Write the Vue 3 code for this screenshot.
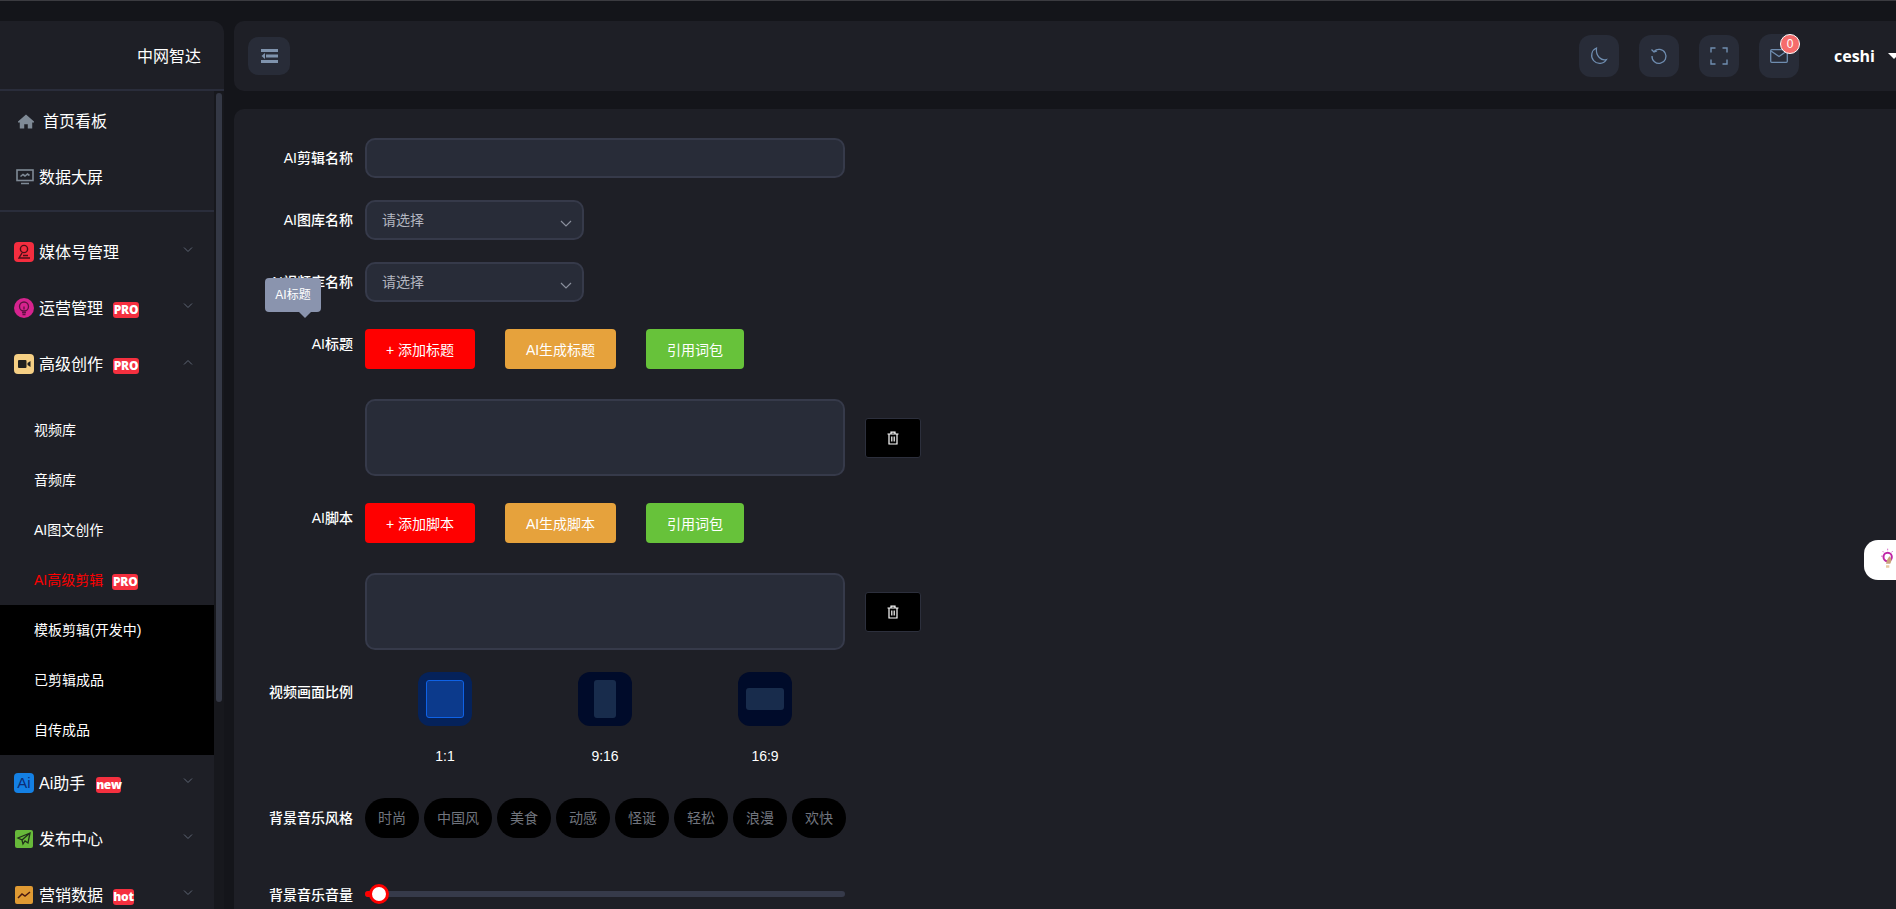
<template>
  <div class="page">
    <aside class="sidebar">
      <div class="logo">中网智达</div>
      <div class="side-body">
        <nav class="menu">
          <div class="top-item home">
            <svg class="top-icon" viewBox="0 0 18 16"><path d="M9 0 0 8v1h2v7h5v-5h4v5h5V9h2V8z" fill="#7f8a96" /></svg>
            <span class="lift">首页看板</span>
          </div>
          <div class="top-item screen">
            <svg class="top-icon wide" viewBox="0 0 18 16" fill="none" stroke="#7f8a96" stroke-width="1.6">
              <rect x="1" y="1" width="16" height="10.5" />
              <path d="M4.5 7.5l2.5-2 2 1.5 2.5-2 2 1.5M5 14.5h8" />
            </svg>
            <span class="lift">数据大屏</span>
          </div>
          <div class="menu-line"></div>

          <template v-for="group in groups" :key="group.name">
            <div class="group-item">
              <span class="badge-icon" :class="group.icon">
                <svg v-if="group.icon === 'ic-media'" viewBox="0 0 20 20" fill="none" stroke="#4a1018" stroke-width="1.4">
                  <circle cx="10" cy="7" r="3.6" />
                  <path d="M8 11l-3 5h11M9 13.5h5" />
                </svg>
                <svg v-else-if="group.icon === 'ic-ops'" viewBox="0 0 20 20" fill="none" stroke="#5c1240" stroke-width="1.3">
                  <circle cx="10" cy="8.5" r="4.5" />
                  <path d="M8 14.5h4M8.5 16.5h3M10 8.5v3" />
                </svg>
                <svg v-else-if="group.icon === 'ic-video'" viewBox="0 0 20 20">
                  <rect x="4" y="6" width="8.5" height="8" rx="1" fill="#20201e" />
                  <path d="M13.5 9l3-2v6l-3-2z" fill="#20201e" />
                </svg>
                <span v-else-if="group.icon === 'ic-ai'" class="ai-mark">Ai</span>
                <svg v-else-if="group.icon === 'ic-send'" viewBox="0 0 18 18" fill="none" stroke="#20301a" stroke-width="1.3">
                  <path d="M15 3 3 8l4 2 1 4 2-3 3 2zM7 10l8-7" />
                </svg>
                <svg v-else viewBox="0 0 18 18" fill="none" stroke="#4a1a10" stroke-width="1.5">
                  <path d="M3 12l4-4 3 2 5-4" />
                </svg>
              </span>
              <span class="group-name lift">{{ group.name }}</span>
              <span v-if="group.tag" class="tag" :class="'tag-' + group.tag">{{ group.tag }}</span>
              <svg class="chevron" viewBox="0 0 10 6" fill="none" stroke="#5e6674" stroke-width="1">
                <path :d="group.open ? 'M1 5.5 5 1.5l4 4' : 'M1 .5l4 4 4-4'" />
              </svg>
            </div>
            <div v-if="group.open" class="submenu">
              <div v-for="sub in subItems" :key="sub.name" class="sub-item" :class="{ active: sub.active, dark: sub.dark }">
                <span class="lift">{{ sub.name }}</span>
                <span v-if="sub.tag" class="tag tag-PRO sub-tag">{{ sub.tag }}</span>
              </div>
            </div>
          </template>
        </nav>
        <div class="scroll-track"><div class="scroll-thumb"></div></div>
      </div>
    </aside>

    <div class="content">
      <header class="topbar">
        <button class="collapse">
          <svg viewBox="0 0 17 14" width="17" height="14" fill="#7f93ad">
            <rect x="0" y="0" width="17" height="3" />
            <rect x="5" y="5.5" width="12" height="3" />
            <rect x="0" y="11" width="17" height="3" />
            <path d="M4 4 .5 7 4 10z" />
          </svg>
        </button>
        <div class="top-actions">
          <button class="tool">
            <svg viewBox="0 0 20 20" width="20" height="20" fill="none" stroke="#6f8db0" stroke-width="1.2">
              <path d="M7.5 2a8 8 0 1 0 10 11.5c-5 1.5-11-3-10-11.5z" />
            </svg>
          </button>
          <button class="tool">
            <svg viewBox="0 0 20 20" width="20" height="20" fill="none" stroke="#6f8db0" stroke-width="1.3">
              <path d="M5 5.5A7 7 0 1 1 3 10" />
              <path d="M2.5 3.5l2.5 2.5 3-1" />
            </svg>
          </button>
          <button class="tool">
            <svg viewBox="0 0 18 18" width="18" height="18" fill="none" stroke="#6f8db0" stroke-width="1.4">
              <path d="M1 5.5V1h4.5M12.5 1H17v4.5M17 12.5V17h-4.5M5.5 17H1v-4.5" />
            </svg>
          </button>
          <button class="tool mail">
            <svg viewBox="0 0 18 14" width="18" height="14" fill="none" stroke="#6f8db0" stroke-width="1.3">
              <rect x=".7" y=".7" width="16.6" height="12.6" rx="1" />
              <path d="M1 2l8 5.5L17 2" />
            </svg>
            <span class="count">0</span>
          </button>
        </div>
        <div class="user">
          <span>ceshi</span>
          <i class="caret"></i>
        </div>
      </header>

      <main class="panel">
        <div class="form">
          <div class="row r-name">
            <label>AI剪辑名称</label>
            <div class="field field-wide"></div>
          </div>
          <div class="row r-name">
            <label>AI图库名称</label>
            <div class="field field-select">请选择<svg class="select-arrow" viewBox="0 0 12 7" fill="none" stroke="#8a8f9c" stroke-width="1.2"><path d="M1 1l5 5 5-5" /></svg></div>
          </div>
          <div class="row r-lib">
            <label>AI视频库名称</label>
            <div class="field field-select">请选择<svg class="select-arrow" viewBox="0 0 12 7" fill="none" stroke="#8a8f9c" stroke-width="1.2"><path d="M1 1l5 5 5-5" /></svg></div>
            <div class="tooltip">AI标题</div>
          </div>

          <template v-for="(block, i) in blocks" :key="block.label">
            <div class="row r-btn">
              <label class="short">{{ block.label }}</label>
              <div class="btn-group">
                <button class="btn red">{{ block.add }}</button>
                <button class="btn orange">{{ block.gen }}</button>
                <button class="btn green">引用词包</button>
              </div>
            </div>
            <div class="row r-text" :class="{ 'r-text-end': i === blocks.length - 1 }">
              <label></label>
              <div class="field field-area"></div>
              <button class="del">
                <svg viewBox="0 0 14 14" width="14" height="14" fill="none" stroke="#fff" stroke-width="1.2">
                  <path d="M1.5 3h11M5 3V1.2h4V3M3 3v10h8V3M5.8 5.5v5M8.2 5.5v5" />
                </svg>
              </button>
            </div>
          </template>

          <div class="row r-ratio">
            <label>视频画面比例</label>
            <div class="ratios">
              <div v-for="r in ratios" :key="r.label" class="ratio">
                <div class="ratio-box" :class="{ on: r.on }">
                  <div class="ratio-inner" :class="r.shape"></div>
                </div>
                <div class="ratio-label">{{ r.label }}</div>
              </div>
            </div>
          </div>

          <div class="row r-music">
            <label>背景音乐风格</label>
            <div class="chips">
              <span v-for="c in styles" :key="c" class="chip">{{ c }}</span>
            </div>
          </div>

          <div class="row">
            <label>背景音乐音量</label>
            <div class="slider">
              <div class="slider-fill"></div>
              <div class="slider-thumb"></div>
            </div>
          </div>
        </div>
      </main>
    </div>

    <div class="float-tab">
      <svg viewBox="0 0 18 26" width="15" height="23" fill="none">
        <path d="M2 3l1.5 1.5M8 0v2M14 3l-1.5 1.5M0 9h2" stroke="#d86ac8" stroke-width="1.2" />
        <circle cx="8" cy="10" r="5" stroke="#c026a8" stroke-width="2.4" />
        <path d="M10 9c3 2 3 6 1 9H6l1-4z" fill="#c9a27a" />
        <path d="M6 20h4v3H6z" fill="#e8c9a0" />
      </svg>
    </div>
  </div>
</template>

<script setup>
const groups = [
  { name: '媒体号管理', icon: 'ic-media' },
  { name: '运营管理', icon: 'ic-ops', tag: 'PRO' },
  { name: '高级创作', icon: 'ic-video', tag: 'PRO', open: true },
  { name: 'Ai助手', icon: 'ic-ai', tag: 'new' },
  { name: '发布中心', icon: 'ic-send' },
  { name: '营销数据', icon: 'ic-data', tag: 'hot' }
]

const subItems = [
  { name: '视频库' },
  { name: '音频库' },
  { name: 'AI图文创作' },
  { name: 'AI高级剪辑', active: true, tag: 'PRO' },
  { name: '模板剪辑(开发中)', dark: true },
  { name: '已剪辑成品', dark: true },
  { name: '自传成品', dark: true }
]

const blocks = [
  { label: 'AI标题', add: '+ 添加标题', gen: 'AI生成标题' },
  { label: 'AI脚本', add: '+ 添加脚本', gen: 'AI生成脚本' }
]

const ratios = [
  { label: '1:1', shape: 'square', on: true },
  { label: '9:16', shape: 'tall' },
  { label: '16:9', shape: 'flat' }
]

const styles = ['时尚', '中国风', '美食', '动感', '怪诞', '轻松', '浪漫', '欢快']
</script>

<style>
html, body {
  margin: 0;
  height: 100%;
  overflow: hidden;
  background: #14151a;
}
</style>

<style scoped>
.page {
  position: relative;
  display: flex;
  height: 909px;
  padding-top: 21px;
  box-sizing: border-box;
  overflow: hidden;
  gap: 10px;
  background: #14151a;
  border-top: 1px solid #3b3b40;
  font-family: "Liberation Sans", "Noto Sans CJK SC", sans-serif;
  font-size: 14px;
  color: #fff;
}

.sidebar {
  width: 224px;
  flex: none;
  display: flex;
  flex-direction: column;
  margin-top: -1px;
  height: 888px;
}

.logo {
  height: 68px;
  padding-right: 23px;
  text-align: right;
  line-height: 72px;
  font-size: 16px;
  background: #1e1f26;
  border-top-right-radius: 12px;
  border-bottom: 2px solid #2a2d3b;
}

.side-body {
  flex: 1;
  display: flex;
  min-height: 0;
  overflow: hidden;
}

.menu {
  width: 214px;
  flex: none;
  background: #1e1f26;
  padding-top: 2px;
}

.scroll-track {
  width: 10px;
  background: #17181d;
}

.scroll-thumb {
  width: 6px;
  height: 609px;
  margin: 2px 0 0 2px;
  border-radius: 3px;
  background: #343845;
}

.lift {
  padding-bottom: 2px;
}

.top-item {
  display: flex;
  align-items: center;
  height: 56px;
  font-size: 16px;
}

.top-icon {
  width: 16px;
  height: 15px;
  flex: none;
}

.home {
  padding-left: 18px;
  gap: 9px;
}

.screen {
  padding-left: 16px;
  gap: 5px;
}

.top-icon.wide {
  width: 18px;
  height: 16px;
}

.menu-line {
  height: 2px;
  margin-top: 5px;
  margin-bottom: 12px;
  background: #2a2d3b;
}

.group-item {
  position: relative;
  display: flex;
  align-items: center;
  height: 56px;
  padding-left: 14px;
  font-size: 16px;
}

.badge-icon {
  width: 20px;
  height: 20px;
  flex: none;
  display: flex;
  align-items: center;
  justify-content: center;
  border-radius: 4px;
  margin-right: 5px;
}

.badge-icon svg {
  width: 100%;
  height: 100%;
}

.ic-media { background: #f52d3f; }
.ic-ops { background: #d6238e; border-radius: 50%; }
.ic-video { background: #f5cf84; }
.ic-ai { background: #1480e4; }
.ic-send { background: #67b93a; width: 18px; height: 18px; margin: 0 6px 0 1px; border-radius: 2px; }
.ic-data { background: #e09a33; width: 18px; height: 18px; margin: 0 6px 0 1px; border-radius: 2px; }

.ai-mark {
  color: #0c2c74;
  font-size: 15px;
  line-height: 20px;
}

.tag {
  display: inline-block;
  margin-left: 10px;
  margin-top: 3px;
  height: 16px;
  line-height: 16px;
  text-align: center;
  border-radius: 3px;
  background: #f5303f;
  font-size: 12px;
  font-weight: 800;
  color: #fff;
  font-family: "Open Sans", "Liberation Sans", sans-serif;
}

.tag-PRO { width: 26px; letter-spacing: -0.3px; }
.tag-new { width: 25px; margin-left: 11px; letter-spacing: -0.4px; }
.tag-hot { width: 21px; letter-spacing: -0.2px; }

.chevron {
  position: absolute;
  right: 21px;
  top: 23px;
  width: 10px;
  height: 6px;
}

.submenu {
  padding-top: 13px;
}

.sub-item {
  display: flex;
  align-items: center;
  height: 50px;
  padding-left: 34px;
  font-size: 14px;
}

.sub-item.active {
  color: #ff0000;
}

.sub-item.dark {
  background: #000;
}

.sub-tag {
  margin-left: 9px;
}

.content {
  flex: 1;
  min-width: 0;
  display: flex;
  flex-direction: column;
  margin-top: -1px;
  gap: 18px;
}

.topbar {
  height: 70px;
  flex: none;
  display: flex;
  align-items: center;
  padding-left: 14px;
  background: #1e1f26;
  border-radius: 10px 0 0 10px;
}

.collapse {
  width: 42px;
  height: 38px;
  padding: 0;
  border: 0;
  border-radius: 10px;
  background: #282c38;
  display: flex;
  align-items: center;
  justify-content: center;
}

.top-actions {
  margin-left: auto;
  display: flex;
  align-items: center;
  gap: 20px;
}

.tool {
  position: relative;
  width: 40px;
  height: 42px;
  padding: 0;
  border: 0;
  border-radius: 12px;
  background: #282c38;
  display: flex;
  align-items: center;
  justify-content: center;
}

.tool.mail {
  height: 44px;
}

.count {
  position: absolute;
  top: 0;
  right: -1px;
  width: 20px;
  height: 20px;
  box-sizing: border-box;
  border: 1px solid #fff;
  border-radius: 50%;
  background: #f56c6c;
  color: #fff;
  font-size: 12px;
  line-height: 18px;
  text-align: center;
  font-family: "Liberation Sans", sans-serif;
}

.user {
  display: flex;
  align-items: center;
  gap: 13px;
  margin-left: 35px;
  margin-right: -4px;
  font-family: "Open Sans", sans-serif;
  font-weight: 700;
  font-size: 16px;
}

.caret {
  width: 0;
  height: 0;
  border-left: 6px solid transparent;
  border-right: 6px solid transparent;
  border-top: 6px solid #fff;
}

.panel {
  flex: 1;
  background: #1e1f26;
  border-radius: 10px 0 0 0;
  overflow: hidden;
  padding-top: 29px;
}

.row {
  position: relative;
  display: flex;
  align-items: flex-start;
  gap: 12px;
}

.row label {
  width: 119px;
  flex: none;
  text-align: right;
  line-height: 40px;
  font-size: 14px;
  font-weight: 500;
}

.row label.short {
  line-height: 30px;
}

.r-name { margin-bottom: 22px; }
.r-lib { margin-bottom: 27px; }
.r-btn { margin-bottom: 30px; }
.r-text { margin-bottom: 27px; align-items: center; }
.r-text-end { margin-bottom: 22px; }
.r-ratio { margin-bottom: 32px; }
.r-music { margin-bottom: 37px; }

.field {
  box-sizing: border-box;
  background: #282c38;
  border: 2px solid #363a4a;
  border-radius: 10px;
}

.field-wide {
  width: 480px;
  height: 40px;
}

.field-select {
  position: relative;
  width: 219px;
  height: 40px;
  padding-left: 15px;
  line-height: 36px;
  font-size: 14px;
  color: #b3b6c0;
}

.select-arrow {
  position: absolute;
  right: 10px;
  top: 18px;
  width: 12px;
  height: 7px;
}

.field-area {
  width: 480px;
  height: 77px;
}

.tooltip {
  position: absolute;
  left: 31px;
  top: 16px;
  width: 56px;
  height: 34px;
  border-radius: 4px;
  background: #8a94ae;
  font-size: 12px;
  line-height: 34px;
  text-align: center;
}

.tooltip::after {
  content: "";
  position: absolute;
  left: 34px;
  top: 34px;
  border-left: 6px solid transparent;
  border-right: 6px solid transparent;
  border-top: 6px solid #8a94ae;
}

.btn-group {
  display: flex;
  gap: 30px;
}

.btn {
  height: 40px;
  padding: 0;
  border: 0;
  border-radius: 4px;
  color: #fff;
  font-family: inherit;
  font-size: 14px;
}

.red { width: 110px; background: #ff0000; }
.orange { width: 111px; background: #e6a23c; }
.green { width: 98px; background: #67c23a; }

.del {
  width: 56px;
  height: 40px;
  margin-left: 8px;
  padding: 0;
  border: 1px solid #2c2f3c;
  border-radius: 3px;
  background: #000;
  display: flex;
  align-items: center;
  justify-content: center;
}

.ratios {
  display: flex;
  margin-left: 53px;
  gap: 106px;
}

.ratio {
  width: 54px;
  text-align: center;
}

.ratio-box {
  width: 54px;
  height: 54px;
  border-radius: 12px;
  background: #000b2a;
  display: flex;
  align-items: center;
  justify-content: center;
}

.ratio-box.on {
  background: #05225a;
}

.ratio-inner {
  box-sizing: border-box;
  border-radius: 3px;
  background: #182c4c;
}

.ratio-inner.square {
  width: 38px;
  height: 38px;
  background: #0c3a8c;
  border: 1px solid #0f62e6;
}

.ratio-inner.tall {
  width: 22px;
  height: 38px;
}

.ratio-inner.flat {
  width: 38px;
  height: 22px;
}

.ratio-label {
  margin-top: 20px;
  line-height: 20px;
  font-size: 14px;
  color: #fff;
  white-space: nowrap;
}

.chips {
  display: flex;
  gap: 5px;
}

.chip {
  height: 40px;
  padding: 0 13px;
  border-radius: 20px;
  background: #000;
  color: #71757e;
  font-size: 14px;
  line-height: 40px;
}

.slider {
  position: relative;
  width: 480px;
  height: 6px;
  margin-top: 16px;
  border-radius: 3px;
  background: #363a4a;
}

.slider-fill {
  width: 14px;
  height: 6px;
  border-radius: 3px 0 0 3px;
  background: #ff0000;
}

.slider-thumb {
  position: absolute;
  left: 4px;
  top: -7px;
  width: 20px;
  height: 20px;
  box-sizing: border-box;
  border: 3px solid #ff0000;
  border-radius: 50%;
  background: #fff;
}

.float-tab {
  position: absolute;
  right: 0;
  top: 539px;
  width: 32px;
  height: 40px;
  border-radius: 14px 0 0 14px;
  background: #fff;
  overflow: hidden;
}

.float-tab svg {
  position: absolute;
  left: 17px;
  top: 8px;
}
</style>
